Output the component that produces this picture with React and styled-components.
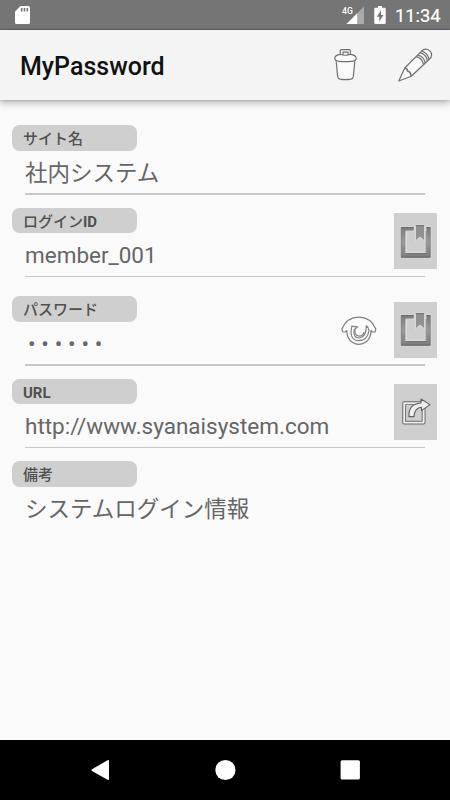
import React from "react";

import styled, { createGlobalStyle } from 'styled-components';

const GlobalStyle = createGlobalStyle`
    * {
        box-sizing: border-box;
    }
    body {
        margin: 0;
        background: #fafafa;
        font-family: Roboto, "Noto Sans CJK JP", sans-serif;
    }
    svg {
        display: block;
    }
`

const Screen = styled.div`
    width: 450px;
    height: 800px;
    display: flex;
    flex-direction: column;
    overflow: hidden;
    background: #fafafa;
`

const StatusBar = styled.div`
    height: 30px;
    flex: none;
    display: flex;
    align-items: center;
    padding: 0 10px 0 15px;
    background: #757575;
    border-bottom: 1px solid #606060;
    color: #fff;
`

const StatusIcons = styled.div`
    margin-left: auto;
    display: flex;
    align-items: center;
    gap: 9px;
`

const Clock = styled.div`
    width: 45px;
    font-size: 18.3px;
    line-height: 29px;
    padding-top: 2px;
    font-weight: 400;
    white-space: nowrap;
    -webkit-text-stroke: 0.2px #fff;
`

const AppBar = styled.div`
    height: 70px;
    flex: none;
    display: flex;
    align-items: center;
    padding: 0 17.5px 0 20px;
    background: #f4f4f4;
    box-shadow: 0 3px 7px rgba(0, 0, 0, 0.28), 0 1px 2px rgba(0, 0, 0, 0.1);
`

const Title = styled.h1`
    margin: 0 auto 0 0;
    padding-top: 3px;
    font-size: 25px;
    line-height: 30px;
    font-weight: 500;
    color: #111;
`

const Actions = styled.div`
    display: flex;
    align-items: center;
    gap: 40px;
`

const Form = styled.div`
    flex: 1;
    padding: 25px 12.5px 0 12.4px;
`

const Field = styled.div`
    display: grid;
    grid-template-columns: 1fr auto 43.5px;
    grid-template-rows: 25.5px 42.5px 1.5px;
    height: ${props => props.$tall ? '88.5px' : '82.5px'};
`

const Label = styled.div`
    width: 125px;
    padding: 1px 0 0 10.5px;
    border-radius: 7.5px;
    background: #cfcfcf;
    color: #505050;
    font-size: 15px;
    line-height: 26px;
    font-weight: ${props => props.$latin ? 700 : 500};
    b {
        font-weight: 700;
    }
`

const Value = styled.div`
    grid-row: 2;
    padding-left: ${props => props.$secret ? '15.5px' : '12.6px'};
    font-size: 22.5px;
    line-height: 44px;
    color: #666;
    white-space: nowrap;
    letter-spacing: ${props => props.$secret ? '5.8px' : 'normal'};
`

const Underline = styled.div`
    grid-row: 3;
    grid-column: 1 / -1;
    margin: 0 12.5px;
    background: #c8c8c8;
`

const SideButton = styled.div`
    grid-row: 1 / 3;
    grid-column: 3;
    width: 43.4px;
    height: 56px;
    margin-top: 5.6px;
    display: flex;
    align-items: center;
    justify-content: center;
    background: #cfcfcf;
`

const EyeButton = styled.div`
    grid-row: 2;
    grid-column: 2;
    padding-right: 16.8px;
    margin-top: -5.5px;
`

const NavBar = styled.div`
    height: 60px;
    flex: none;
    display: flex;
    align-items: center;
    justify-content: center;
    background: #000;
    svg {
        width: 125px;
        height: 60px;
        fill: #fff;
    }
`

const SdCard = () => (
    <svg width="15" height="20" viewBox="0 0 15 20">
        <path d="M5.5 1H13.5Q15 1 15 2.5V17.5Q15 19 13.5 19H1.5Q0 19 0 17.5V6.5Z" fill="#fff" />
        <path d="M6.7 3V6.5M9.5 3V6.5M12.3 3V6.5" stroke="#757575" strokeWidth="1.6" />
    </svg>
)

const Signal = () => (
    <svg width="23" height="20" viewBox="0 0 23 20">
        <path d="M22 1.5V19H4.5Z" fill="#aaa" />
        <path d="M15.2 8.3V19H4.5Z" fill="#fff" />
        <text x="0" y="9" fill="#fff" fontSize="9.5" fontWeight="500" textLength="10.8" lengthAdjust="spacingAndGlyphs">4G</text>
    </svg>
)

const Battery = () => (
    <svg width="12" height="20" viewBox="0 0 12 20">
        <path d="M4 1H8V2.7H10.5Q11.7 2.7 11.7 3.9V17.8Q11.7 19 10.5 19H1.5Q0.3 19 0.3 17.8V3.9Q0.3 2.7 1.5 2.7H4Z" fill="#fff" />
        <path d="M7 5.5L2.6 11.7H5.3V16.5L9.5 10.1H7Z" fill="#757575" />
    </svg>
)

const Trash = () => (
    <svg width="24" height="32" viewBox="0 0 24 32" fill="none" stroke="#707070" strokeWidth="1.2" strokeLinejoin="round">
        <path d="M2.2 12.2L3.6 27.5Q3.9 29.7 6.1 30.2Q11.5 31.2 16.9 30.2Q19 29.7 19.3 27.5L20.8 12.2" fill="#fafafa" />
        <path d="M0.8 9.5Q0.8 6 6.2 5.4V1.6Q6.2 0.7 7 0.7H15.6Q16.4 0.7 16.4 1.6V5.4Q22.2 6 22.2 9.5Q22.2 12 17.5 12.3Q11.5 12.9 5.5 12.3Q0.8 12 0.8 9.5Z" fill="#fafafa" />
        <path d="M9 5.4V3.2H14V5.4M6.2 5.5Q11.3 7 16.4 5.5" />
    </svg>
)

const Pencil = () => (
    <svg width="35" height="34" viewBox="0 0 35 34" fill="none" stroke="#707070" strokeWidth="1.2" strokeLinejoin="round">
        <path d="M0.8 33L6.8 20L23.8 2.8Q26.3 0.2 29.8 1.5Q33.7 3.5 33.6 7Q33.5 9.5 31.5 11L13.3 28.2Z" fill="#fafafa" />
        <path d="M6.7 20.5Q9.7 20 9.4 23Q13 23.8 13 28.3" strokeWidth="1.5" />
        <path d="M18.2 8.7Q24.2 10 25.6 16.6M19.8 7Q25.8 8.4 27.3 15M22 4.7Q28.2 6.4 29.5 12.9M23.6 3.2Q29.5 4.7 31.1 11.3" />
    </svg>
)

const Bookmark = ({ id }) => (
    <svg width="32" height="35" viewBox="0 0 32 35">
        <defs>
            <linearGradient id={id} x1="0" y1="0" x2="0" y2="1">
                <stop offset="0" stopColor="#7c7c7c" />
                <stop offset="0.5" stopColor="#9a9a9a" />
                <stop offset="1" stopColor="#7a7a7a" />
            </linearGradient>
        </defs>
        <path d="M0.7 3H14V7H5.9V29.3H26V3H30.9V34H0.7Z" fill={`url(#${id})`} stroke="#dedede" strokeWidth="0.8" />
        <path d="M1.1 3.6H14M26.4 3.6H30.5M1.1 33.2H30.5M6 29.4H26.4" stroke="#686868" strokeWidth="1" />
        <path d="M1.3 3.5V33M30.2 3.5V33M26.2 7V29" stroke="#7b7b7b" strokeWidth="0.7" />
        <path d="M6.4 7.5V28.5H25.5" fill="none" stroke="#e2e2e2" strokeWidth="0.9" />
        <path d="M15.4 1.1H24.7V17L20 13L15.4 17Z" fill="#919191" stroke="#dedede" strokeWidth="1" />
        <path d="M15.8 1.7H24.2" stroke="#686868" strokeWidth="1" />
    </svg>
)

const Eye = () => (
    <svg width="36" height="30" viewBox="0 0 36 30" fill="none" stroke="#808080" strokeWidth="1.2" strokeLinejoin="round">
        <path d="M0.8 13Q6 1.2 17.8 1.2Q29.6 1.2 34.8 13L34 16H31.3L30 14.5Q30 23 24.3 26.3Q17.8 30.5 11.3 26.3Q5.8 23 5.8 14.5L4.3 16H1.8Z" fill="#fafafa" />
        <path d="M11 9.7Q7.5 23.5 17 24.7Q26.5 25 28 14.5Q28 11.5 25.3 9.8Q25.5 21 18.5 22Q11.5 22.3 13.3 12.8" />
        <path d="M11 10.3L16.8 10.8L14 13Q13 19.5 18.2 20.2Q22.5 19.8 23 16" />
    </svg>
)

const Share = () => (
    <svg width="30" height="28" viewBox="0 0 30 28" strokeLinejoin="round">
        <path d="M3.2 5.2H22.6V24.6H3.2Z" fill="none" stroke="#666" strokeWidth="3.8" />
        <path d="M3.2 5.2H22.6V24.6H3.2Z" fill="none" stroke="#eee" strokeWidth="1.9" />
        <path d="M8 18.6Q7 6 20 5V1L29 6.6L20.5 12.6V9.2Q13.5 9.8 13 18.6Z" fill="#eee" stroke="#606060" strokeWidth="1.1" />
    </svg>
)

const App = () => (
    <Screen>
        <GlobalStyle />
        <StatusBar>
            <SdCard />
            <StatusIcons>
                <Signal />
                <Battery />
                <Clock>11:34</Clock>
            </StatusIcons>
        </StatusBar>
        <AppBar>
            <Title>MyPassword</Title>
            <Actions>
                <Trash />
                <Pencil />
            </Actions>
        </AppBar>
        <Form>
            <Field>
                <Label>サイト名</Label>
                <Value>社内システム</Value>
                <Underline />
            </Field>
            <Field $tall>
                <Label>ログイン<b>ID</b></Label>
                <Value>member_001</Value>
                <SideButton><Bookmark id="bm-login" /></SideButton>
                <Underline />
            </Field>
            <Field>
                <Label>パスワード</Label>
                <Value $secret>••••••</Value>
                <EyeButton><Eye /></EyeButton>
                <SideButton><Bookmark id="bm-pass" /></SideButton>
                <Underline />
            </Field>
            <Field>
                <Label $latin>URL</Label>
                <Value>http://www.syanaisystem.com</Value>
                <SideButton><Share /></SideButton>
                <Underline />
            </Field>
            <Field>
                <Label>備考</Label>
                <Value>システムログイン情報</Value>
            </Field>
        </Form>
        <NavBar>
            <svg viewBox="0 0 125 60"><path d="M54 29.2L69.5 20.3Q71 19.7 71 21V39Q71 40.5 69.5 39.8L54 31Q52.8 30.1 54 29.2Z" /></svg>
            <svg viewBox="0 0 125 60"><circle cx="62.4" cy="30" r="10.1" /></svg>
            <svg viewBox="0 0 125 60"><rect x="52.6" y="20.3" width="19.3" height="19.3" rx="1.5" /></svg>
        </NavBar>
    </Screen>
)

export default App;
